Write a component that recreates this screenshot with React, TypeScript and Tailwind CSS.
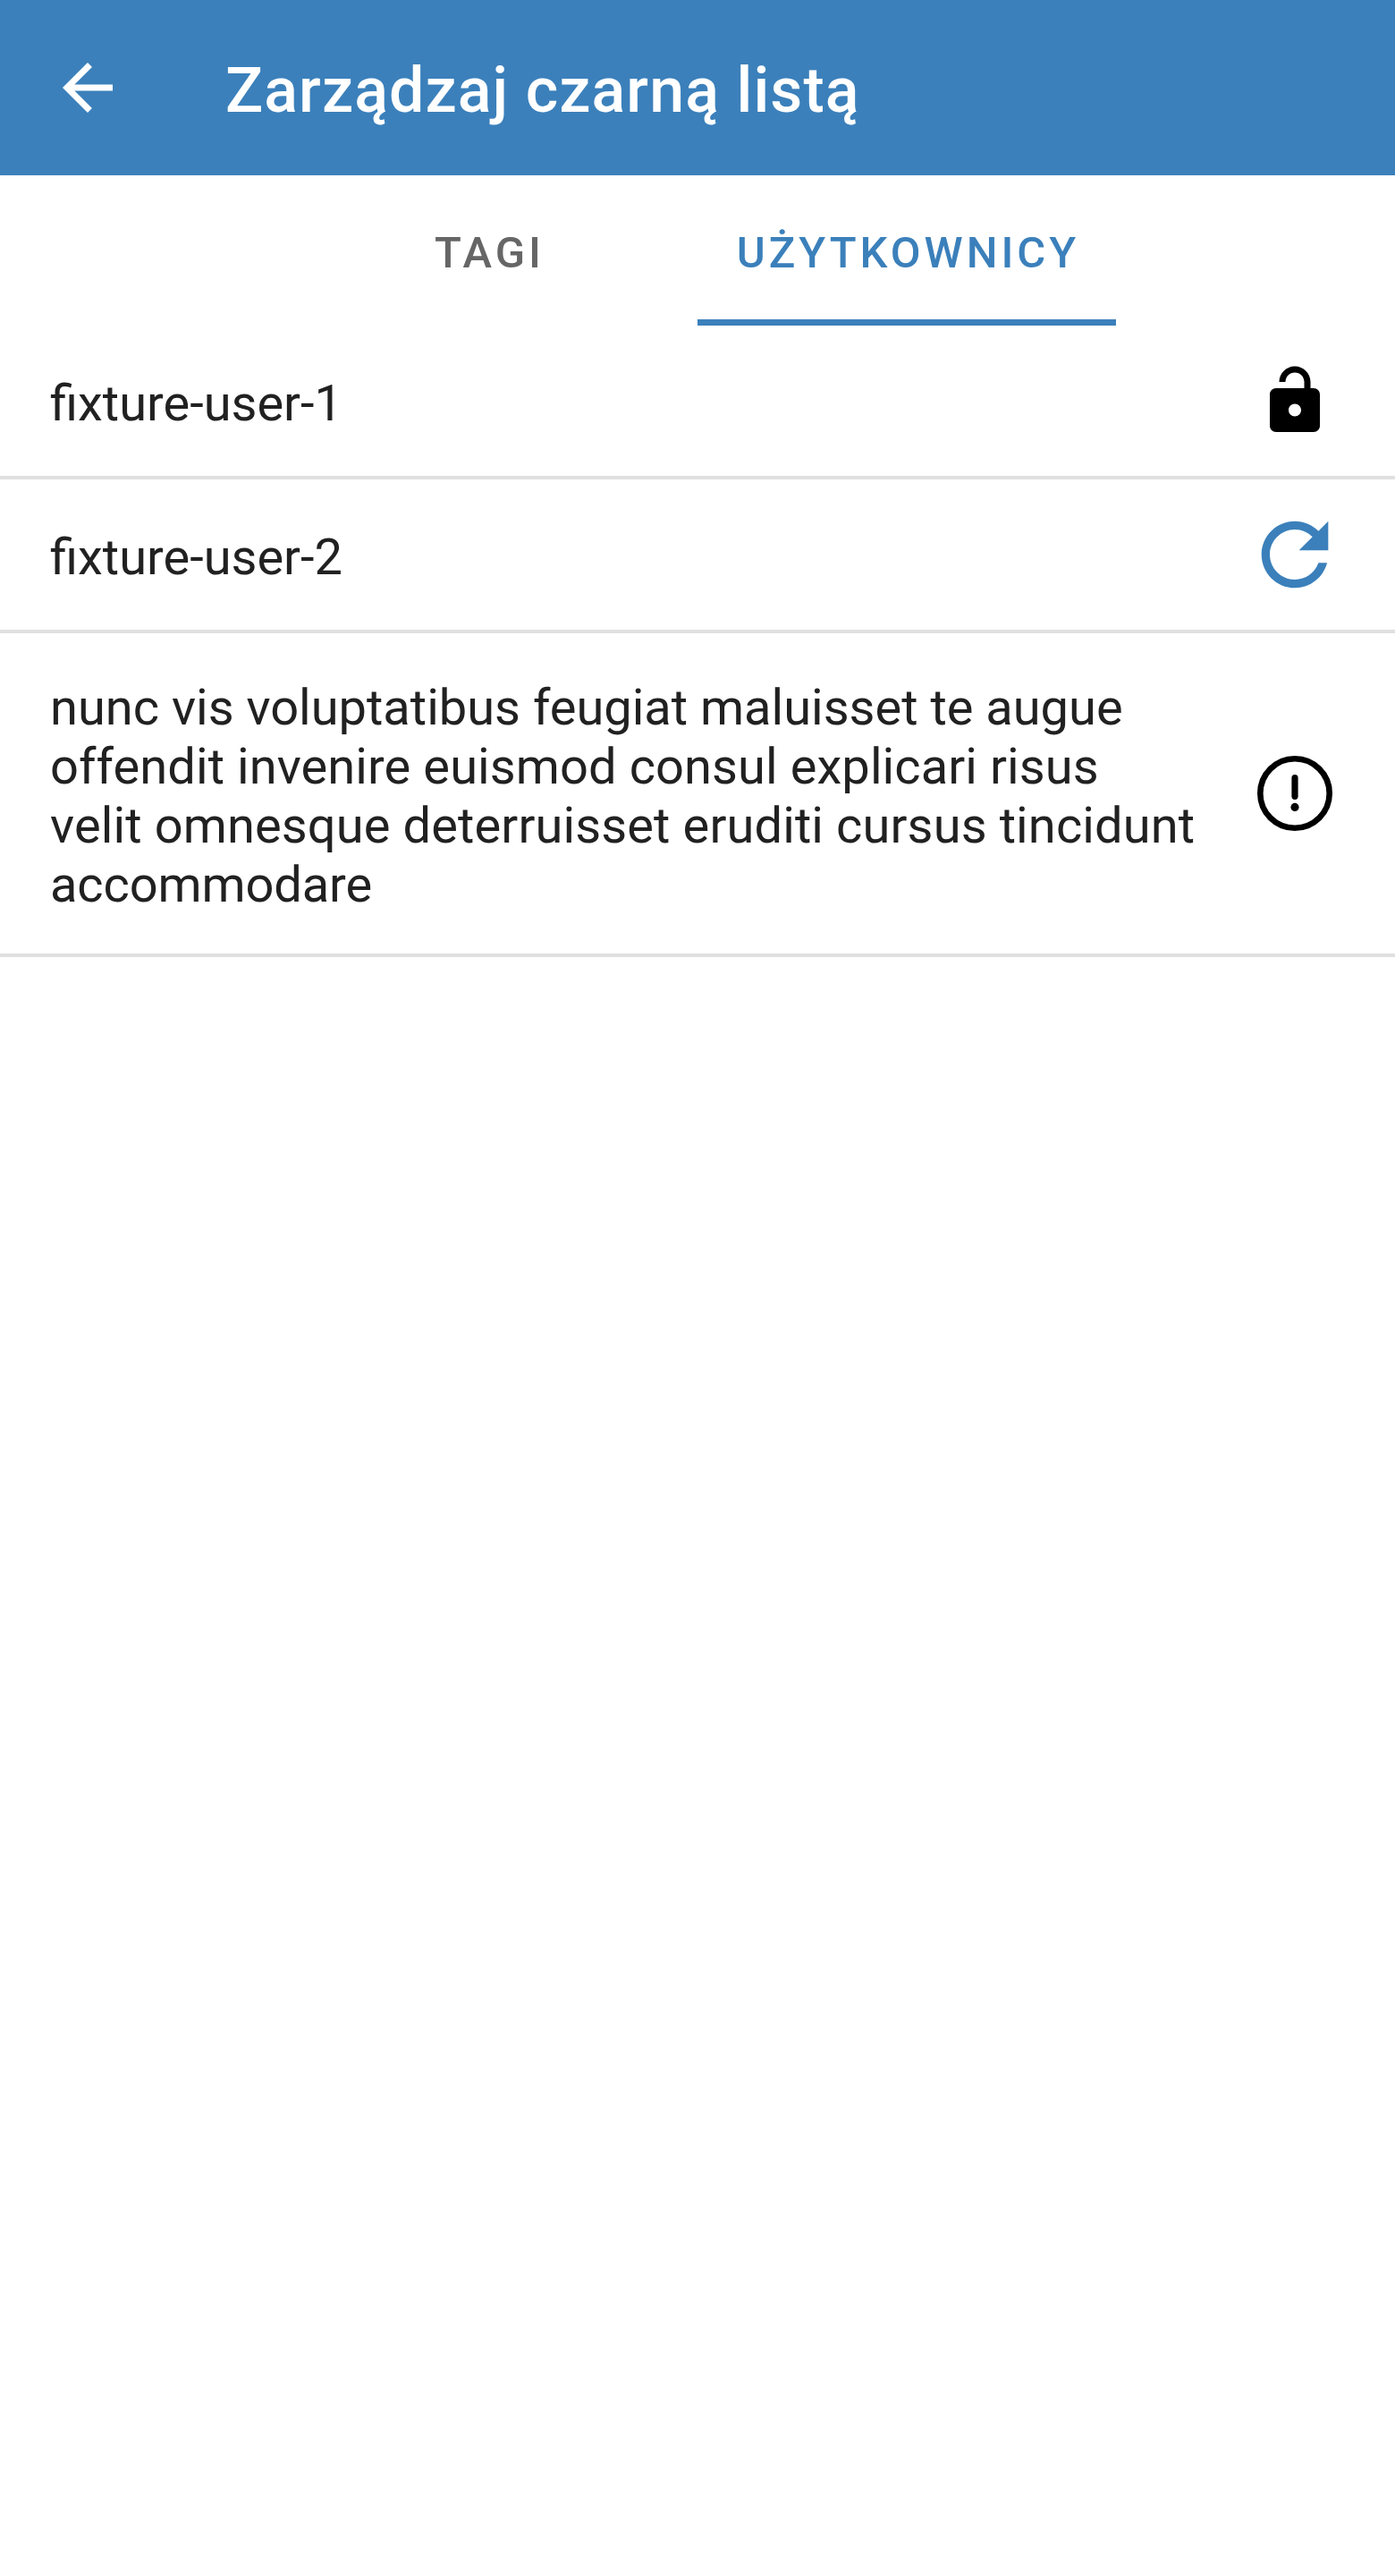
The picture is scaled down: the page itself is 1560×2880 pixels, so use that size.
import type { ReactNode } from "react";

function BackIcon() {
  return (
    <svg viewBox="0 0 24 24" className="size-[84px] shrink-0" fill="currentColor">
      <path d="M20 11H7.83l5.59-5.59L12 4l-8 8 8 8 1.41-1.41L7.83 13H20v-2z" />
    </svg>
  );
}

function UnlockIcon() {
  return (
    <svg viewBox="0 0 24 24" className="size-[84px]" fill="currentColor">
      <path
        fillRule="evenodd"
        d="M12 17c1.1 0 2-.9 2-2s-.9-2-2-2-2 .9-2 2 .9 2 2 2zm6-9h-1V6c0-2.76-2.24-5-5-5S7 3.24 7 6h2c0-1.66 1.34-3 3-3s3 1.34 3 3v2H6c-1.1 0-2 .9-2 2v10c0 1.1.9 2 2 2h12c1.1 0 2-.9 2-2V10c0-1.1-.9-2-2-2z"
      />
    </svg>
  );
}

function RefreshIcon() {
  return (
    <svg viewBox="0 0 24 24" className="size-[112px] text-[#3b80bb]" fill="currentColor">
      <path d="M17.65 6.35C16.2 4.9 14.21 4 12 4c-4.42 0-7.99 3.58-7.99 8s3.57 8 7.99 8c3.73 0 6.84-2.55 7.73-6h-2.08c-.82 2.33-3.04 4-5.65 4-3.31 0-6-2.69-6-6s2.69-6 6-6c1.66 0 3.14.69 4.22 1.78L13 11h7V4l-2.35 2.35z" />
    </svg>
  );
}

function AlertIcon() {
  return (
    <svg viewBox="0 0 84 84" className="size-[84px]" fill="none" stroke="currentColor">
      <circle cx="42" cy="42" r="38.7" strokeWidth="6.6" />
      <path d="M42 24.7v20.6" strokeWidth="7.2" strokeLinecap="round" />
      <circle cx="42" cy="57.4" r="4.6" fill="currentColor" stroke="none" />
    </svg>
  );
}

function Tab({ label, active = false }: { label: string; active?: boolean }) {
  return (
    <button
      className={
        active
          ? "flex w-[468px] items-center justify-center border-b-[7px] border-[#3b80bb] text-[#3b80bb]"
          : "flex w-[468px] items-center justify-center border-b-[7px] border-transparent text-[#666666]"
      }
    >
      <span className="pt-[13px] pl-[3px] text-[49px] leading-[58px] font-medium tracking-[4px]">{label}</span>
    </button>
  );
}

function Row({ name, icon }: { name: ReactNode; icon: ReactNode }) {
  return (
    <li className="flex min-h-[172px] items-center border-b-4 border-[#e0e0e0] pl-14">
      <span className="w-[1296px] pt-[50px] pb-11 text-[56px] leading-[66px] text-[#212121]">{name}</span>
      <span className="-my-4 ml-10 flex w-28 shrink-0 items-center justify-center text-black">{icon}</span>
    </li>
  );
}

export default function App() {
  return (
    <div className="min-h-[2880px] w-[1560px] bg-white font-[Roboto,sans-serif]">
      <header className="flex h-[196px] items-center gap-28 bg-[#3b80bb] pl-14 text-white">
        <BackIcon />
        <h1 className="pt-1.5 text-[70px] leading-[82px] font-medium tracking-[1.07px] whitespace-nowrap">
          Zarządzaj czarną listą
        </h1>
      </header>
      <nav className="flex h-[168px] justify-center">
        <Tab label="TAGI" />
        <Tab label="UŻYTKOWNICY" active />
      </nav>
      <ul>
        <Row name="fixture-user-1" icon={<UnlockIcon />} />
        <Row name="fixture-user-2" icon={<RefreshIcon />} />
        <Row
          name={
            <>
              <span className="block">nunc vis voluptatibus feugiat maluisset te augue </span>
              <span className="block tracking-[0.085px]">offendit invenire euismod consul explicari risus </span>
              <span className="block tracking-[0.12px]">velit omnesque deterruisset eruditi cursus tincidunt </span>
              <span className="block tracking-[-0.13px]">accommodare</span>
            </>
          }
          icon={<AlertIcon />}
        />
      </ul>
    </div>
  );
}
